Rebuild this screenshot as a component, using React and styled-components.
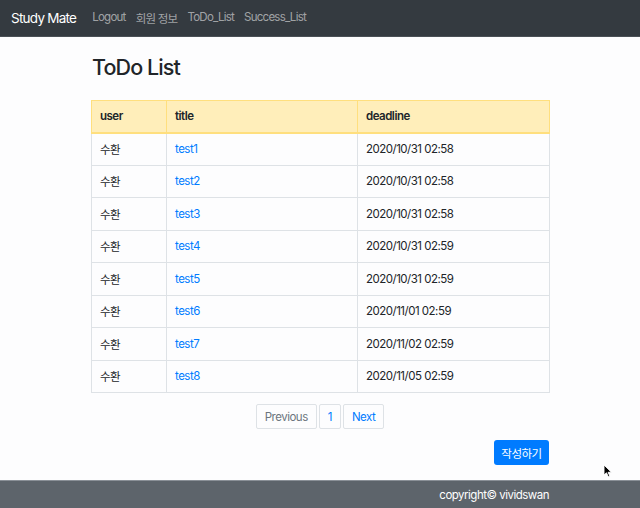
import React from 'react'
import styled, { createGlobalStyle } from 'styled-components'

const GlobalStyle = createGlobalStyle`
  html, body {
    margin: 0;
    padding: 0;
    background: #fdfdfe;
  }
  body {
    font-family: Inter, "Noto Sans CJK KR", sans-serif;
    color: #212529;
    letter-spacing: -0.5px;
  }
`

const Page = styled.div`
  position: relative;
  width: 640px;
  height: 508px;
  display: flex;
  flex-direction: column;
  overflow: hidden;
`

const NavBar = styled.nav`
  height: 37px;
  background-color: #343a40;
  border-bottom: 1px solid #4a5056;
  display: flex;
  align-items: center;
  padding: 0 11px;
  box-sizing: border-box;
`

const Brand = styled.a`
  color: #fff;
  font-size: 13.5px;
  letter-spacing: -0.75px;
  margin-right: 16px;
  padding-bottom: 1px;
`

const NavLinks = styled.div`
  display: flex;
  gap: 10px;
`

const NavLink = styled.a`
  color: rgba(255, 255, 255, 0.55);
  font-size: 11.5px;
  letter-spacing: -0.75px;
`

const Main = styled.main`
  flex: 1;
  width: 458px;
  margin: 0 auto;
  display: flex;
  flex-direction: column;
`

const Title = styled.h1`
  font-size: 21.5px;
  font-weight: 500;
  letter-spacing: -0.9px;
  margin: 18px 0 20px 1px;
  line-height: 25px;
`

const Table = styled.table`
  width: 100%;
  border-collapse: collapse;
  font-size: 11.5px;
  table-layout: fixed;
`

const HeadCell = styled.th`
  background-color: #ffeeba;
  border: 1px solid #ffdf7e;
  border-bottom-width: 2px;
  text-align: left;
  font-weight: 600;
  height: 32px;
  padding: 0 8px;
  box-sizing: border-box;
  width: ${p => p.$w};
`

const Cell = styled.td`
  border: 1px solid #dee2e6;
  height: 32.5px;
  padding: 0 8px;
  box-sizing: border-box;
  color: ${p => (p.$link ? '#007bff' : '#212529')};
`

const Pagination = styled.ul`
  list-style: none;
  display: flex;
  justify-content: center;
  gap: 2px;
  margin: 11px 0 0;
  padding: 0;
`

const PageItem = styled.li`
  border: 1px solid #dee2e6;
  border-radius: 2px;
  height: 25px;
  box-sizing: border-box;
  padding: 0 8px;
  display: flex;
  align-items: center;
  font-size: 11.5px;
  color: ${p => (p.$muted ? '#6c757d' : '#007bff')};
`

const Actions = styled.div`
  display: flex;
  justify-content: flex-end;
  margin-top: 11px;
`

const WriteButton = styled.button`
  background-color: #007bff;
  color: #fff;
  border: none;
  border-radius: 3px;
  height: 25px;
  width: 55px;
  padding: 0;
  font-family: Inter, "Noto Sans CJK KR", sans-serif;
  font-size: 11.5px;
  letter-spacing: -0.5px;
`

const Footer = styled.footer`
  height: 28px;
  background-color: #5d646b;
  border-top: 1px solid #8a9097;
  box-sizing: border-box;
  display: flex;
  justify-content: flex-end;
  align-items: center;
  padding-right: 91px;
  color: #fff;
  font-size: 11.5px;
`

const Cursor = styled.svg`
  position: absolute;
  left: 603px;
  top: 464px;
`

const todos = [
  { id: 1, deadline: '2020/10/31 02:58' },
  { id: 2, deadline: '2020/10/31 02:58' },
  { id: 3, deadline: '2020/10/31 02:58' },
  { id: 4, deadline: '2020/10/31 02:59' },
  { id: 5, deadline: '2020/10/31 02:59' },
  { id: 6, deadline: '2020/11/01 02:59' },
  { id: 7, deadline: '2020/11/02 02:59' },
  { id: 8, deadline: '2020/11/05 02:59' },
]

export default function App() {
  return (
    <Page>
      <GlobalStyle />
      <NavBar>
        <Brand>Study Mate</Brand>
        <NavLinks>
          <NavLink>Logout</NavLink>
          <NavLink>회원 정보</NavLink>
          <NavLink>ToDo_List</NavLink>
          <NavLink>Success_List</NavLink>
        </NavLinks>
      </NavBar>
      <Main>
        <Title>ToDo List</Title>
        <Table>
          <thead>
            <tr>
              <HeadCell $w="75px">user</HeadCell>
              <HeadCell $w="191px">title</HeadCell>
              <HeadCell $w="192px">deadline</HeadCell>
            </tr>
          </thead>
          <tbody>
            {todos.map(todo => (
              <tr key={todo.id}>
                <Cell>수환</Cell>
                <Cell $link>test{todo.id}</Cell>
                <Cell>{todo.deadline}</Cell>
              </tr>
            ))}
          </tbody>
        </Table>
        <Pagination>
          <PageItem $muted>Previous</PageItem>
          <PageItem>1</PageItem>
          <PageItem>Next</PageItem>
        </Pagination>
        <Actions>
          <WriteButton>작성하기</WriteButton>
        </Actions>
      </Main>
      <Footer>copyright© vividswan</Footer>
      <Cursor width="10" height="14" viewBox="0 0 10 14">
        <path d="M1 1 L1 11 L3.5 8.8 L5.3 12.8 L6.8 12.1 L5.1 8.3 L8.4 8.2 Z" fill="#000" stroke="#fff" strokeWidth="0.9" />
      </Cursor>
    </Page>
  )
}
